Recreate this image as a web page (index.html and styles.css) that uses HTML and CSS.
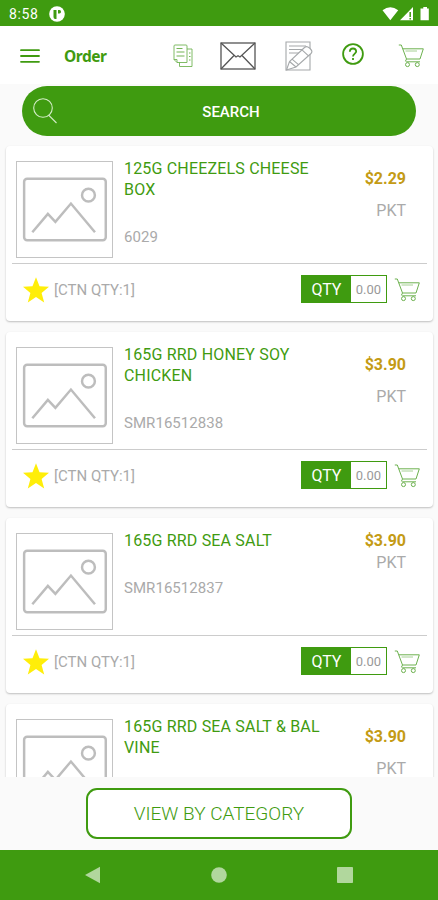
FILE: index.html
```
<!DOCTYPE html>
<html lang="en">
<head>
<meta charset="utf-8">
<title>Order</title>
<link rel="stylesheet" href="styles.css">
</head>
<body>
<svg class="defs" aria-hidden="true">
  <symbol id="cart" viewBox="0 0 26 24">
    <path d="M.8 1H3.300L8.500 15H22L25.300 4.800H4.800M8.500 15Q6.500 17.800 8.500 17.800H22"/>
    <path d="M7.500 7H19" opacity=".6"/>
    <circle cx="9.500" cy="20.600" r="2"/><circle cx="19.300" cy="20.600" r="2"/>
  </symbol>
  <symbol id="picture" viewBox="0 0 96 96">
    <rect x="7.200" y="17" width="82.500" height="62" rx="3"/>
    <circle cx="72.200" cy="33.500" r="6.500"/>
    <path d="M15.500 71L31.200 52.500L38.800 60.500L54.500 42L78.800 71"/>
  </symbol>
  <symbol id="star" viewBox="0 0 26 26">
    <path d="M13 .3L16.500 9.300L26 9.800L18.600 15.900L21.200 25.400L13 20.100L4.800 25.400L7.400 15.900L0 9.800L9.500 9.300Z"/>
  </symbol>
</svg>

<div class="status">
  <span class="clock">8:58</span>
  <svg class="app-badge" viewBox="0 0 16 16"><circle cx="8" cy="8" r="7.800" fill="#fff"/><path d="M4.500 4H7.500V13H6.200Q4.500 13 4.500 11ZM9 4H10.500Q12 4 12 5.700T10.500 7.500H9Z" fill="#3f9b10"/></svg>
  <svg class="signals" viewBox="0 0 48 16">
    <path d="M.5 4.300Q8.300-2 16.200 4.300L8.300 14.300ZM18 14.300L31 1V14.300ZM41.300 1H45V2.500H46.800V14.300H38.500V2.500H41.300Z" fill="#fff"/>
    <path d="M28.200 6V11M28.200 12V13.500" stroke="#3f9b10" stroke-width="1.500"/>
  </svg>
</div>

<header class="toolbar">
  <svg class="menu" viewBox="0 0 20 14"><path d="M1 1.200H19M1 7H19M1 12.800H19"/></svg>
  <h1>Order</h1>
  <svg class="copy" viewBox="0 0 20 24"><path d="M1 2Q1 1 2 1H13Q14 1 14 2V18.500H4L1 15.500ZM4 18.500V15.500H1M14 5H19V22.500H6.500V18.500"/><path d="M3.500 4.500H9.500M3.500 8H11.500M3.500 12H11.500M16 9H17.500M16 12.500H17.500M16 16H17.500" stroke-width="1.200"/></svg>
  <svg class="mail" viewBox="0 0 36 28"><rect x="1" y="1" width="34" height="26"/><path d="M1 1L16 15L18 13.800L20 15L35 1M1 27L14 13.500M35 27L22 13.500"/></svg>
  <svg class="note" viewBox="0 0 28 30"><path d="M1 1H25V29H1ZM4 5H21M4 8.500H17M4 12H14"/><path class="pencil" d="M1.500 29L4.500 20.500L19.500 6.500Q21.500 4.500 24.500 7L25.500 8Q28 10.500 26 12.500L11 26ZM4.500 20.500L11 26M7 18.200L13.500 23.700M17 8.800L23.500 14.800"/></svg>
  <svg class="help" viewBox="0 0 22 22"><circle cx="11" cy="11" r="9.900"/><path d="M7.800 8.700Q8 5.500 11 5.500T14.200 8.500C14.200 10.500 11 10.800 11 13.500M11 15V17"/></svg>
  <svg class="cart"><use href="#cart"/></svg>
</header>

<div class="search">
  <svg viewBox="0 0 24 26"><circle cx="10" cy="10" r="9.300"/><path d="M15.500 17L23.500 25"/></svg>
  <span>SEARCH</span>
</div>

<main class="list">
  <article class="card">
    <div class="info">
      <svg class="thumb"><use href="#picture"/></svg>
      <div class="desc"><h2>125G CHEEZELS CHEESE<br>BOX</h2><p>6029</p></div>
      <div class="price"><b>$2.29</b><span>PKT</span></div>
    </div>
    <div class="actions">
      <svg class="star"><use href="#star"/></svg><span class="carton">[CTN QTY:1]</span>
      <div class="qty"><b>QTY</b><span>0.00</span></div><svg class="cart"><use href="#cart"/></svg>
    </div>
  </article>
  <article class="card">
    <div class="info">
      <svg class="thumb"><use href="#picture"/></svg>
      <div class="desc"><h2>165G RRD HONEY SOY<br>CHICKEN</h2><p>SMR16512838</p></div>
      <div class="price"><b>$3.90</b><span>PKT</span></div>
    </div>
    <div class="actions">
      <svg class="star"><use href="#star"/></svg><span class="carton">[CTN QTY:1]</span>
      <div class="qty"><b>QTY</b><span>0.00</span></div><svg class="cart"><use href="#cart"/></svg>
    </div>
  </article>
  <article class="card single">
    <div class="info">
      <svg class="thumb"><use href="#picture"/></svg>
      <div class="desc"><h2>165G RRD SEA SALT</h2><p>SMR16512837</p></div>
      <div class="price"><b>$3.90</b><span>PKT</span></div>
    </div>
    <div class="actions">
      <svg class="star"><use href="#star"/></svg><span class="carton">[CTN QTY:1]</span>
      <div class="qty"><b>QTY</b><span>0.00</span></div><svg class="cart"><use href="#cart"/></svg>
    </div>
  </article>
  <article class="card">
    <div class="info">
      <svg class="thumb"><use href="#picture"/></svg>
      <div class="desc"><h2>165G RRD SEA SALT &amp; BAL<br>VINE</h2></div>
      <div class="price"><b>$3.90</b><span>PKT</span></div>
    </div>
  </article>
</main>

<footer class="bottom"><button>VIEW BY CATEGORY</button></footer>
<nav class="system">
  <svg viewBox="0 0 16 18"><path d="M15 .8V17.200L0 9Z"/></svg>
  <svg viewBox="0 0 16 18"><circle cx="8" cy="9" r="7.800"/></svg>
  <svg viewBox="0 0 16 18"><rect y="1" width="16" height="16" rx=".8"/></svg>
</nav>
</body>
</html>
```

FILE: styles.css
```
* { box-sizing: border-box; }
body {
  margin: 0;
  width: 438px;
  height: 900px;
  overflow: hidden;
  display: flex;
  flex-direction: column;
  background: #fafafa;
  font-family: Roboto, sans-serif;
  color: #aaa;
}
svg { flex: none; fill: none; display: block; }
.defs { position: absolute; width: 0; height: 0; }
h1, h2, p { margin: 0; }

.status {
  flex: none;
  height: 26px;
  display: flex;
  align-items: center;
  padding: 1px 8px 0 9px;
  background: #3f9b10;
  color: #fff;
}
.clock { width: 40px; font-size: 14px; letter-spacing: .6px; }
.app-badge { width: 16px; height: 16px; }
.signals { width: 48px; height: 16px; margin-left: auto; }

.toolbar {
  flex: none;
  height: 58px;
  display: flex;
  align-items: center;
  padding: 0 14px 0 20px;
  background: #fff;
  stroke: #3f9b10;
}
.menu { width: 20px; height: 14px; stroke-width: 1.8; stroke-linecap: round; margin-top: 1px; }
.toolbar h1 {
  width: 108px;
  margin: 2px 1px 0 24px;
  font: 700 15.5px/20px "Noto Sans", sans-serif;
  letter-spacing: -.5px;
  color: #3f9b10;
}
.copy { width: 20px; height: 24px; margin-top: 1px; stroke: #73b455; stroke-width: .9; }
.mail { width: 36px; height: 28px; margin: 1px 0 0 27px; stroke: #555; stroke-width: 1.3; }
.note { width: 28px; height: 30px; margin: 1px 0 0 29px; stroke: #a5a8aa; stroke-width: 1.1; }
.pencil { fill: #fff; }
.help { width: 22px; height: 22px; margin: -3px 0 0 29px; stroke-width: 1.8; }
.cart { width: 26px; height: 24px; stroke: #6db14f; stroke-width: 1; }
.toolbar .cart { margin: 2px 0 0 auto; }

.search {
  flex: none;
  height: 50px;
  margin: 2px 22px 0;
  padding: 0 11px;
  display: flex;
  align-items: center;
  background: #3f9b10;
  border-radius: 25px;
  color: #fff;
}
.search svg { width: 24px; height: 26px; stroke: #d4edc8; stroke-width: 1.1; }
.search span { flex: 1; padding: 2px 0 0; text-align: center; font-size: 15px; font-weight: 500; }

.list { flex: none; height: 641px; overflow: hidden; padding: 10px 5px 0 6px; }
.card {
  height: 175px;
  margin-bottom: 11px;
  padding: 0 6px;
  background: #fff;
  border-radius: 4px;
  box-shadow: 0 1px 2px rgba(0, 0, 0, .24);
}
.info { height: 118px; display: flex; padding: 15px 21px 0 4px; border-bottom: 1px solid #ccc; }
.thumb { width: 97px; height: 97px; border: 1px solid #c4c4c4; stroke: #bdbdbd; stroke-width: 2.500; }
.desc { flex: 1; padding: 0 0 0 11px; margin-top: -3px; white-space: nowrap; }
.desc h2 { font-size: 16px; font-weight: 400; line-height: 21px; letter-spacing: .18px; color: #3f9b10; }
.desc p { margin-top: 27px; font-size: 15px; line-height: 21px; letter-spacing: .05px; }
.price { display: flex; flex-direction: column; text-align: right; font-size: 16px; line-height: 32px; margin-top: 2px; }
.price b { font-weight: 700; font-size: 16px; color: #c49b14; }
.single .price { line-height: 22px; margin-top: -3px; }
.actions { height: 52px; display: flex; align-items: center; padding: 0 7px 0 11px; }
.star { width: 26px; height: 26px; fill: #ffee09; }
.carton { margin-left: 5px; font-size: 15px; }
.qty { margin: -2px 7px 0 auto; width: 86px; height: 28px; display: flex; border: 1px solid #3f9b10; background: #fff; line-height: 28px; text-align: center; }
.qty b { width: 49px; background: #3f9b10; color: #fff; font-size: 16px; font-weight: 400; }
.qty span { flex: 1; font-size: 13px; color: #999; }
.actions .cart { margin-top: -1px; }

.bottom { flex: none; height: 73px; padding-top: 11px; text-align: center; background: #fafafa; }
.bottom button {
  width: 266px;
  height: 51px;
  border: 2px solid #3f9b10;
  border-radius: 11px;
  background: #fff;
  font: 300 19px/46px Roboto, sans-serif;
  color: #3f9b10;
  padding: 1px 0 0;
}
.system { flex: none; height: 50px; background: #3f9b10; display: flex; justify-content: center; gap: 110px; padding: 16px 0 0 0; }
.system svg { width: 16px; height: 18px; fill: #b1d79d; }
.system svg:first-child { margin-left: -1px; }
```
